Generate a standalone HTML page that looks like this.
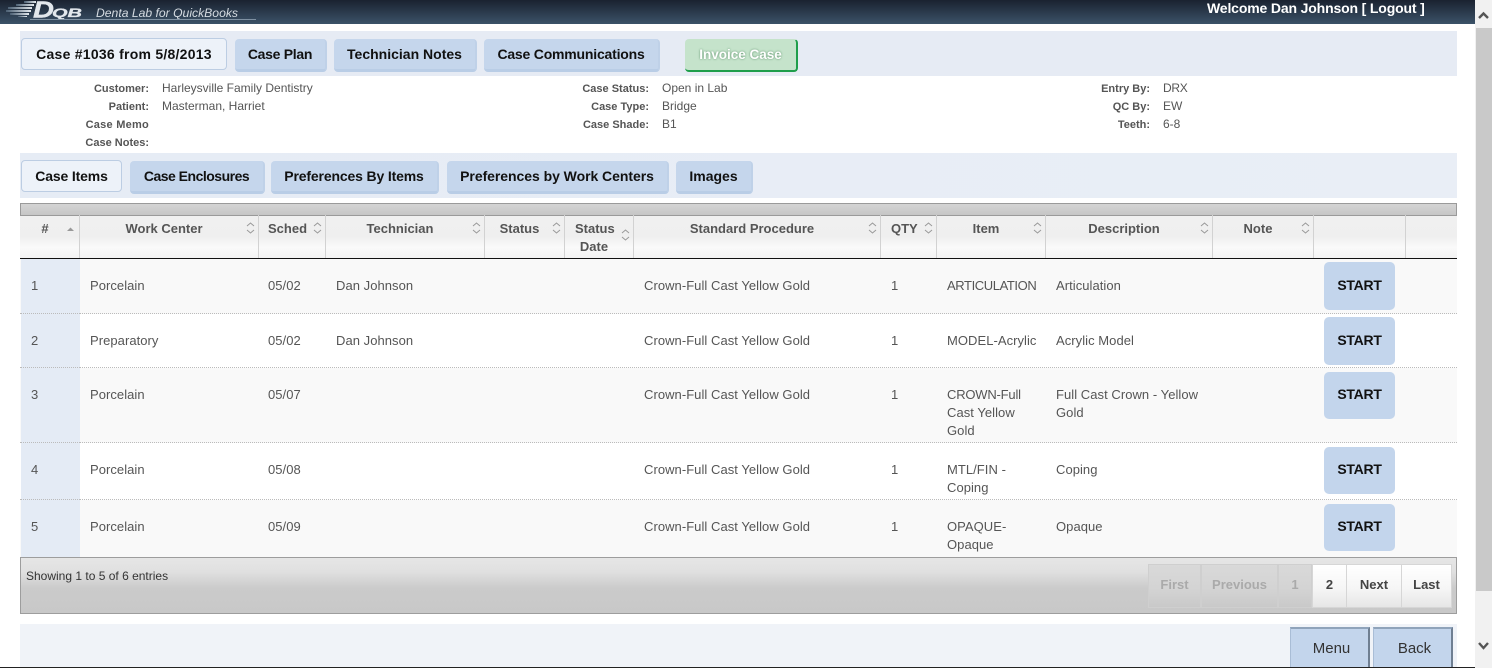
<!DOCTYPE html>
<html><head><meta charset="utf-8"><title>Case</title>
<style>
html,body{margin:0;padding:0;width:1492px;height:668px;overflow:hidden;background:#fff}
body{position:relative;font-family:"Liberation Sans",sans-serif}
div,span.t{position:absolute;box-sizing:border-box}
.t{white-space:nowrap;line-height:18px;height:18px}
.bar{left:20px;width:1437px;height:45px;background:#e6ebf4}
.tab{height:33px;line-height:30px;text-align:center;background:#c5d6ec;border-radius:4px;border-right:2px solid #bfd1e8;border-bottom:3px solid #b9cde6;font-weight:bold;font-size:14px;color:#111;white-space:nowrap}
.tab.on{background:#edf2f9;border:1px solid #bccde3;height:32px;line-height:30px}
.l{font-size:11px;font-weight:bold;color:#555;text-align:right;margin-top:1px}
.v{font-size:12px;color:#555}
.h{font-size:13px;font-weight:bold;color:#555;text-align:center;line-height:18px;white-space:nowrap;margin-top:1px}
.c{font-size:13px;color:#555;margin-top:1px;letter-spacing:.05px}
.vl{width:1px;top:215px;height:43px;background:#d2d2d2}
.row{left:20px;width:1437px;border-bottom:1px dotted #bbb}
.num{left:21px;width:59px;background:#e4ebf5}
.st{left:1324px;width:71px;background:#c3d5ec;border-radius:5px;font-weight:bold;font-size:14px;letter-spacing:-.25px;color:#111;text-align:center}
.pg{top:564px;height:44px;line-height:40px;text-align:center;font-size:13px;font-weight:bold;border:1px solid #d6d6d6;color:#444;background:linear-gradient(#fff 0,#f6f6f6 55%,#e6e6e6 100%)}
.pg.d{color:#aaa;background:linear-gradient(#d9d9d9 0,#d4d4d4 55%,#c9c9c9 100%);border-color:#cfcfcf}
.bb{top:627px;height:41px;background:#c3d5ec;border-top:2px solid #8fa3ba;border-left:1px solid #a9bdd6;border-right:2px solid #6f7f92;font-size:15px;color:#333;text-align:center;line-height:40px}
</style></head>
<body>
<div style="left:0;top:0;width:1475px;height:24px;background:linear-gradient(#1a2230,#3b5268)"></div>
<svg style="position:absolute;left:0;top:0" width="290" height="24">
<defs><linearGradient id="s" x1="0" x2="1" y1="0" y2="0"><stop offset="0" stop-color="#4b5f73"/><stop offset="1" stop-color="#e4e9ee"/></linearGradient></defs>
<g fill="url(#s)"><rect x="24" y="1" width="12" height="2"/><rect x="16" y="4" width="18" height="2"/><rect x="8" y="7" width="24" height="2"/><rect x="6" y="10" width="25" height="2"/><rect x="10" y="13" width="19" height="2"/><rect x="18" y="16" width="9" height="1"/></g>
<text x="33" y="17.5" font-family="Liberation Sans" font-style="italic" font-weight="bold" font-size="23" fill="#e2e7ec" stroke="#e2e7ec" stroke-width=".4" textLength="21" lengthAdjust="spacingAndGlyphs">D</text>
<text x="52" y="17" font-family="Liberation Sans" font-style="italic" font-weight="bold" font-size="12" fill="#e2e7ec" stroke="#e2e7ec" stroke-width=".3" textLength="30" lengthAdjust="spacingAndGlyphs">QB</text>
<text x="96" y="17" font-family="Liberation Sans" font-style="italic" font-size="12" fill="#d5dbe1" textLength="142" lengthAdjust="spacingAndGlyphs">Denta Lab for QuickBooks</text>
<rect x="30" y="19" width="226" height="1" fill="#7f91a2"/>
</svg>
<span class="t" style="left:1207px;top:-1px;font-size:14px;font-weight:bold;color:#fff;letter-spacing:-.15px">Welcome Dan Johnson [ Logout ]</span>

<div style="left:1475px;top:0;width:17px;height:668px;background:#f1f1f1"></div>
<div style="left:1476px;top:28px;width:16px;height:563px;background:#c9c9c9"></div>
<svg style="position:absolute;left:1475px;top:0" width="17" height="668"><path d="M4 18 L8.5 13.5 L13 18" fill="none" stroke="#555" stroke-width="2.4"/><path d="M4 643 L8.5 648 L13 643" fill="none" stroke="#555" stroke-width="2.4"/></svg>

<div class="bar" style="top:31px"></div>
<div class="tab on" style="left:21px;top:38px;width:206px;letter-spacing:.25px">Case #1036 from 5/8/2013</div>
<div class="tab" style="left:235px;top:39px;width:92px;letter-spacing:-.3px">Case Plan</div>
<div class="tab" style="left:334px;top:39px;width:143px">Technician Notes</div>
<div class="tab" style="left:484px;top:39px;width:176px;letter-spacing:-.2px">Case Communications</div>
<div class="tab" style="left:685px;top:39px;width:113px;background:#c5e3cb;color:#fff;border-right:2px solid #1f9e4b;border-bottom:2px solid #1f9e4b;border-top:1px solid #c5e3cb;font-size:13.5px;text-shadow:0 0 2px #5a8f68">Invoice Case</div>

<span class="t l" style="left:50px;width:99px;top:79px">Customer:</span><span class="t v" style="left:162px;top:79px">Harleysville Family Dentistry</span>
<span class="t l" style="left:50px;width:99px;top:97px">Patient:</span><span class="t v" style="left:162px;top:97px">Masterman, Harriet</span>
<span class="t l" style="left:50px;width:99px;top:115px;letter-spacing:.25px">Case Memo</span>
<span class="t l" style="left:50px;width:99px;top:133px">Case Notes:</span>
<span class="t l" style="left:550px;width:99px;top:79px">Case Status:</span><span class="t v" style="left:662px;top:79px">Open in Lab</span>
<span class="t l" style="left:550px;width:99px;top:97px">Case Type:</span><span class="t v" style="left:662px;top:97px">Bridge</span>
<span class="t l" style="left:550px;width:99px;top:115px">Case Shade:</span><span class="t v" style="left:662px;top:115px">B1</span>
<span class="t l" style="left:1051px;width:99px;top:79px">Entry By:</span><span class="t v" style="left:1163px;top:79px;letter-spacing:-.3px">DRX</span>
<span class="t l" style="left:1051px;width:99px;top:97px">QC By:</span><span class="t v" style="left:1163px;top:97px">EW</span>
<span class="t l" style="left:1051px;width:99px;top:115px">Teeth:</span><span class="t v" style="left:1163px;top:115px">6-8</span>

<div class="bar" style="top:153px;background:linear-gradient(90deg,#e6ecf5,#e9eef6)"></div>
<div class="tab on" style="left:21px;top:160px;width:101px;letter-spacing:-.15px">Case Items</div>
<div class="tab" style="left:130px;top:161px;width:135px;letter-spacing:-.5px">Case Enclosures</div>
<div class="tab" style="left:271px;top:161px;width:168px;letter-spacing:-.15px">Preferences By Items</div>
<div class="tab" style="left:447px;top:161px;width:222px;letter-spacing:-.05px">Preferences by Work Centers</div>
<div class="tab" style="left:676px;top:161px;width:77px">Images</div>

<div style="left:20px;top:203px;width:1437px;height:13px;background:linear-gradient(#d4d4d4,#c6c6c6);border:1px solid #9a9a9a"></div>
<div style="left:20px;top:216px;width:1437px;height:43px;background:linear-gradient(#f0f0f0 0,#efefef 50%,#fafafa 75%,#f3f3f3 100%);border-bottom:1px solid #111"></div>
<div class="vl" style="left:79px"></div><div class="vl" style="left:258px"></div><div class="vl" style="left:325px"></div><div class="vl" style="left:484px"></div><div class="vl" style="left:564px"></div><div class="vl" style="left:633px"></div><div class="vl" style="left:880px"></div><div class="vl" style="left:936px"></div><div class="vl" style="left:1045px"></div><div class="vl" style="left:1212px"></div><div class="vl" style="left:1313px"></div><div class="vl" style="left:1405px"></div>

<div class="t h" style="left:35px;width:20px;top:219px">#</div>
<div class="t h" style="left:80px;width:168px;top:219px">Work Center</div>
<div class="t h" style="left:268px;width:37px;top:219px">Sched</div>
<div class="t h" style="left:326px;width:148px;top:219px">Technician</div>
<div class="t h" style="left:495px;width:49px;top:219px">Status</div>
<div class="h" style="left:575px;width:38px;top:219px">Status<br>Date</div>
<div class="t h" style="left:634px;width:236px;top:219px">Standard Procedure</div>
<div class="t h" style="left:891px;width:26px;top:219px">QTY</div>
<div class="t h" style="left:937px;width:98px;top:219px">Item</div>
<div class="t h" style="left:1046px;width:156px;top:219px">Description</div>
<div class="t h" style="left:1213px;width:90px;top:219px">Note</div>

<svg style="position:absolute;left:0;top:215px" width="1492" height="44">
<path d="M67 16 L70.5 12.5 L74 16Z" fill="#999"/>
<g fill="none" stroke="#999" stroke-width="1">
<path d="M247 11 L250.5 8 L254 11 M247 15 L250.5 18 L254 15"/>
<path d="M314 11 L317.5 8 L321 11 M314 15 L317.5 18 L321 15"/>
<path d="M473 11 L476.5 8 L480 11 M473 15 L476.5 18 L480 15"/>
<path d="M553 11 L556.5 8 L560 11 M553 15 L556.5 18 L560 15"/>
<path d="M622 18 L625.5 15 L629 18 M622 22 L625.5 25 L629 22"/>
<path d="M869 11 L872.5 8 L876 11 M869 15 L872.5 18 L876 15"/>
<path d="M925 11 L928.5 8 L932 11 M925 15 L928.5 18 L932 15"/>
<path d="M1034 11 L1037.5 8 L1041 11 M1034 15 L1037.5 18 L1041 15"/>
<path d="M1201 11 L1204.5 8 L1208 11 M1201 15 L1204.5 18 L1208 15"/>
<path d="M1302 11 L1305.5 8 L1309 11 M1302 15 L1305.5 18 L1309 15"/>
</g></svg>

<div class="row" style="top:259px;height:55px;background:#f9f9f9"></div>
<div class="row" style="top:314px;height:54px;background:#fff"></div>
<div class="row" style="top:368px;height:75px;background:#f9f9f9"></div>
<div class="row" style="top:443px;height:57px;background:#fff"></div>
<div class="row" style="top:500px;height:57px;background:#f9f9f9;border-bottom:0"></div>
<div class="num" style="top:259px;height:298px"></div>
<div style="left:21px;top:313px;width:59px;border-top:1px dotted #bbb"></div>
<div style="left:21px;top:367px;width:59px;border-top:1px dotted #bbb"></div>
<div style="left:21px;top:442px;width:59px;border-top:1px dotted #bbb"></div>
<div style="left:21px;top:499px;width:59px;border-top:1px dotted #bbb"></div>

<span class="t c" style="left:31px;top:276px">1</span><span class="t c" style="left:90px;top:276px">Porcelain</span><span class="t c" style="left:268px;top:276px">05/02</span><span class="t c" style="left:336px;top:276px">Dan Johnson</span><span class="t c" style="left:644px;top:276px">Crown-Full Cast Yellow Gold</span><span class="t c" style="left:891px;top:276px">1</span><span class="t c" style="left:947px;top:276px;letter-spacing:-.4px">ARTICULATION</span><span class="t c" style="left:1056px;top:276px">Articulation</span>
<span class="t c" style="left:31px;top:331px">2</span><span class="t c" style="left:90px;top:331px">Preparatory</span><span class="t c" style="left:268px;top:331px">05/02</span><span class="t c" style="left:336px;top:331px">Dan Johnson</span><span class="t c" style="left:644px;top:331px">Crown-Full Cast Yellow Gold</span><span class="t c" style="left:891px;top:331px">1</span><span class="t c" style="left:947px;top:331px">MODEL-Acrylic</span><span class="t c" style="left:1056px;top:331px">Acrylic Model</span>
<span class="t c" style="left:31px;top:385px">3</span><span class="t c" style="left:90px;top:385px">Porcelain</span><span class="t c" style="left:268px;top:385px">05/07</span><span class="t c" style="left:644px;top:385px">Crown-Full Cast Yellow Gold</span><span class="t c" style="left:891px;top:385px">1</span><span class="t c" style="left:947px;top:385px;letter-spacing:-.2px">CROWN-Full</span><span class="t c" style="left:947px;top:403px">Cast Yellow</span><span class="t c" style="left:947px;top:421px">Gold</span><span class="t c" style="left:1056px;top:385px">Full Cast Crown - Yellow</span><span class="t c" style="left:1056px;top:403px">Gold</span>
<span class="t c" style="left:31px;top:460px">4</span><span class="t c" style="left:90px;top:460px">Porcelain</span><span class="t c" style="left:268px;top:460px">05/08</span><span class="t c" style="left:644px;top:460px">Crown-Full Cast Yellow Gold</span><span class="t c" style="left:891px;top:460px">1</span><span class="t c" style="left:947px;top:460px">MTL/FIN -</span><span class="t c" style="left:947px;top:478px">Coping</span><span class="t c" style="left:1056px;top:460px">Coping</span>
<span class="t c" style="left:31px;top:517px">5</span><span class="t c" style="left:90px;top:517px">Porcelain</span><span class="t c" style="left:268px;top:517px">05/09</span><span class="t c" style="left:644px;top:517px">Crown-Full Cast Yellow Gold</span><span class="t c" style="left:891px;top:517px">1</span><span class="t c" style="left:947px;top:517px">OPAQUE-</span><span class="t c" style="left:947px;top:535px">Opaque</span><span class="t c" style="left:1056px;top:517px">Opaque</span>

<div class="st" style="top:262px;height:48px;line-height:46px">START</div>
<div class="st" style="top:317px;height:48px;line-height:46px">START</div>
<div class="st" style="top:372px;height:47px;line-height:44px">START</div>
<div class="st" style="top:447px;height:47px;line-height:44px">START</div>
<div class="st" style="top:504px;height:47px;line-height:44px">START</div>

<div style="left:20px;top:557px;width:1437px;height:57px;background:linear-gradient(#e6e6e6 0,#e0e0e0 25%,#cbcbcb 55%,#c8c8c8 100%);border:1px solid #9d9d9d"></div>
<span class="t" style="left:26px;top:567px;font-size:12px;color:#333">Showing 1 to 5 of 6 entries</span>
<div class="pg d" style="left:1148px;width:53px">First</div>
<div class="pg d" style="left:1201px;width:77px">Previous</div>
<div class="pg d" style="left:1278px;width:34px">1</div>
<div class="pg" style="left:1312px;width:35px">2</div>
<div class="pg" style="left:1346px;width:56px">Next</div>
<div class="pg" style="left:1401px;width:51px">Last</div>

<div style="left:20px;top:624px;width:1437px;height:44px;background:#f0f3f8"></div>
<div class="bb" style="left:1290px;width:80px;padding-left:4px">Menu</div>
<div class="bb" style="left:1373px;width:80px;padding-left:4px">Back</div>
<div style="left:0;top:667px;width:1475px;height:1px;background:#222"></div>
</body></html>
